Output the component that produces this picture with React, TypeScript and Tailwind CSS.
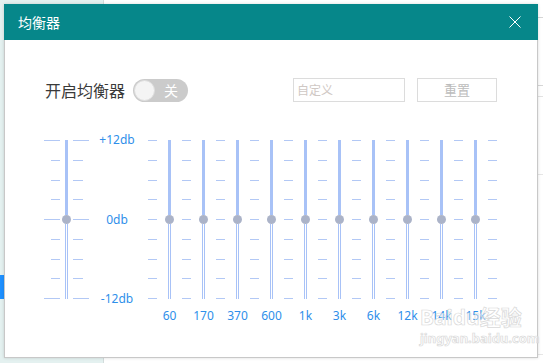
const bands = ["60", "170", "370", "600", "1k", "3k", "6k", "12k", "14k", "15k"]
const rows = [0, 1, 2, 3, 4, 5, 6, 7, 8]

const Ticks = ({ width, long, short, align }: { width: string; long: string; short: string; align: string }) => {
    return (
        <div className={`flex h-[159px] flex-col justify-between ${width} ${align}`}>
            {rows.map(r => (
                <div key={r} className={`h-[1px] bg-[#b2c8f5] ${r % 4 === 0 ? long : short}`} />
            ))}
        </div>
    )
}

const Slider = ({ width }: { width: string }) => {
    return (
        <div className={`flex h-[159px] flex-col items-center ${width}`}>
            <div className="h-[75px] w-[3px] bg-[#a8c2f7]" />
            <div className="h-[9px] w-[9px] rounded-full bg-[#abb3c8]" />
            <div className="flex flex-1 gap-[1px]">
                <div className="w-[1px] bg-[#a8c2f7]" />
                <div className="w-[1px] bg-[#a8c2f7]" />
            </div>
        </div>
    )
}

const App = () => {
    return (
        <div className="relative h-[363px] w-[543px] overflow-hidden bg-white font-['Noto_Sans','Noto_Sans_CJK_SC',sans-serif]">
            {/* page behind the dialog */}
            <div className="flex h-full">
                <div className="w-[104px] border-r border-[#d3dcdc] bg-[#e4f1f0]">
                    <div className="mt-[275px] h-[24px] w-[6px] bg-[#1e90ff]" />
                </div>
                <div className="flex flex-1 flex-col">
                    <div className="h-[18px] border-b border-[#d6d6d6]" />
                    <div className="h-[68px] border-b border-[#d6d6d6]" />
                    <div className="h-[11px] border-b border-[#e2e2e2]" />
                    <div className="h-[78px] border-b border-[#e6e6e6]" />
                    <div className="h-[180px] border-b border-[#e6e6e6]" />
                </div>
            </div>

            {/* dialog */}
            <div className="absolute left-[4px] top-[4px] flex h-[354px] w-[534px] flex-col border-x border-b border-[#c8c8c8] bg-white shadow-[0_0_3px_rgba(0,0,0,0.15)]">
                <div className="-mx-[1px] flex h-[36px] items-center justify-between bg-[#06878a] pl-[14px] pr-[17px]">
                    <span className="text-[14px] text-white font-['Noto_Sans_CJK_SC',sans-serif]">均衡器</span>
                    <svg width="12" height="12" viewBox="0 0 12 12">
                        <path d="M0.5 0.5 L11.5 11.5 M11.5 0.5 L0.5 11.5" stroke="#ffffff" strokeWidth="1" />
                    </svg>
                </div>

                <div className="flex flex-col pl-[39px]">
                    <div className="ml-[1px] mt-[38px] flex h-[24px] items-center">
                        <span className="w-[88px] text-[16px] text-[#3a3a3a] font-['Noto_Sans_CJK_SC',sans-serif]">开启均衡器</span>
                        <div className="flex h-[23px] w-[55px] items-center rounded-full bg-[#cbcbcb] px-[1px]">
                            <div className="h-[21px] w-[21px] rounded-full border border-[#dedede] bg-[#f4f4f4]" />
                            <span className="flex-1 text-center text-[14px] leading-none text-white font-['Noto_Sans_CJK_SC',sans-serif]">关</span>
                        </div>
                        <div className="ml-[105px] flex h-[24px] w-[112px] items-center border border-[#dcdcdc] px-[3px]">
                            <span className="text-[12px] text-[#cfc8c4] font-['Noto_Sans_CJK_SC',sans-serif]">自定义</span>
                        </div>
                        <div className="ml-[12px] flex h-[24px] w-[80px] items-center justify-center border border-[#dcdcdc]">
                            <span className="text-[13px] text-[#bcbcbc] font-['Noto_Sans_CJK_SC',sans-serif]">重置</span>
                        </div>
                    </div>

                    <div className="mt-[38px] flex items-start">
                        {/* preamp */}
                        <Ticks width="w-[16px]" long="w-[16px]" short="w-[9px]" align="items-end" />
                        <div className="ml-[1px]">
                            <Slider width="w-[10px]" />
                        </div>
                        <div className="ml-[2px]">
                            <Ticks width="w-[16px]" long="w-[16px]" short="w-[10px]" align="items-start" />
                        </div>

                        {/* db scale */}
                        <div className="-my-[7px] flex h-[173px] w-[59px] flex-col items-center justify-between pr-[3px] text-[12px] leading-[14px] text-[#2f8fea]">
                            <span>+12db</span>
                            <span>0db</span>
                            <span>-12db</span>
                        </div>

                        {/* bands */}
                        <div className="flex flex-col">
                            <div className="flex">
                                <Ticks width="w-[9px]" long="w-[9px]" short="w-[9px]" align="items-start" />
                                {bands.map(b => (
                                    <div key={b} className="flex">
                                        <Slider width="w-[25px]" />
                                        <Ticks width="w-[9px]" long="w-[9px]" short="w-[9px]" align="items-start" />
                                    </div>
                                ))}
                            </div>
                            <div className="mt-[10px] flex gap-[9px] pl-[9px] text-[12px] leading-[14px] text-[#2f8fea]">
                                {bands.map(b => (
                                    <div key={b} className="flex w-[25px] justify-center whitespace-nowrap">
                                        {b}
                                    </div>
                                ))}
                            </div>
                        </div>
                    </div>
                </div>
            </div>

            {/* watermark */}
            <div className="pointer-events-none absolute left-[420px] top-[304px] flex flex-col items-start whitespace-nowrap text-white/40 [-webkit-text-stroke:0.7px_#d8d8d8]">
                <span className="text-[21px] font-bold leading-[26px] font-['Noto_Sans','Noto_Sans_CJK_SC',sans-serif]">Baidu经验</span>
                <span className="text-[13px] font-bold leading-[16px]">jingyan.baidu.com</span>
            </div>
        </div>
    )
}

export default App
